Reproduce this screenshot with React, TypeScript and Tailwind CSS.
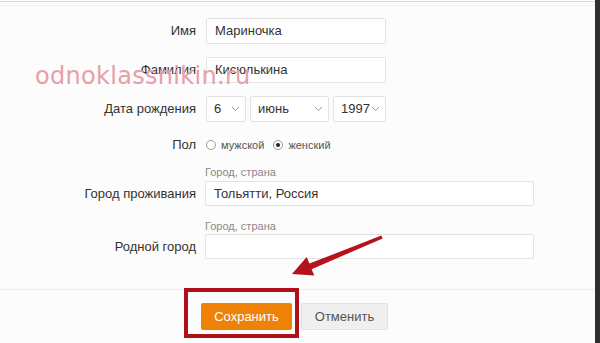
import React from "react";

const font = { fontFamily: '"Liberation Sans", Arial, sans-serif' };

function Chevron() {
  return (
    <svg width="9" height="6" viewBox="0 0 9 6" className="shrink-0">
      <path d="M1 1 L4.5 4.5 L8 1" fill="none" stroke="#9a9a9a" strokeWidth="1" />
    </svg>
  );
}

function Select({ value, w }: { value: string; w: string }) {
  return (
    <div
      className={`${w} h-[26px] bg-white border border-[#e3e3e3] rounded-[2px] flex items-center justify-between pl-[7px] pr-[5px] text-[13px] text-[#333]`}
    >
      <span>{value}</span>
      <Chevron />
    </div>
  );
}

function Label({ children }: { children: React.ReactNode }) {
  return (
    <div className="w-[196px] shrink-0 text-right text-[13px] text-[#333] pr-0">
      {children}
    </div>
  );
}

export default function App() {
  return (
    <div className="relative w-[600px] h-[343px] flex bg-[#2f2f2f] overflow-hidden" style={font}>
      <div className="w-[595px] h-full bg-[#fcfcfc] flex flex-col">
        <div className="h-px mt-px bg-[#dcdcdc]" />
        <div className="h-px mt-[3px] bg-[#f1f1f1]" />

        {/* Имя */}
        <div className="flex items-center gap-[10px] mt-[12px]">
          <Label>Имя</Label>
          <div className="w-[180px] h-[26px] bg-white border border-[#e3e3e3] rounded-[2px] flex items-center pl-[8px] text-[13px] text-[#333]">
            Мариночка
          </div>
        </div>

        {/* Фамилия */}
        <div className="flex items-center gap-[10px] mt-[13px]">
          <Label>Фамилия</Label>
          <div className="w-[180px] h-[26px] bg-white border border-[#e3e3e3] rounded-[2px] flex items-center pl-[8px] text-[13px] text-[#333]">
            Кисюлькина
          </div>
        </div>

        {/* Дата рождения */}
        <div className="flex items-center gap-[10px] mt-[13px]">
          <Label>Дата рождения</Label>
          <div className="flex items-center gap-[4px]">
            <Select value="6" w="w-[40px]" />
            <Select value="июнь" w="w-[79px]" />
            <Select value="1997" w="w-[53px]" />
          </div>
        </div>

        {/* Пол */}
        <div className="flex items-center gap-[10px] mt-[15px] h-[16px]">
          <Label>Пол</Label>
          <div className="flex items-center text-[11px] text-[#555]">
            <span className="w-[10px] h-[10px] rounded-full border border-[#9a9a9a] bg-white" />
            <span className="ml-[5px]">мужской</span>
            <span className="ml-[9px] w-[10px] h-[10px] rounded-full border border-[#9a9a9a] bg-white flex items-center justify-center">
              <span className="w-[4px] h-[4px] rounded-full bg-[#222]" />
            </span>
            <span className="ml-[5px]">женский</span>
          </div>
        </div>

        {/* Город проживания */}
        <div className="flex items-end gap-[9px] mt-[13px]">
          <div className="w-[196px] h-[25px] shrink-0 flex items-center justify-end text-[13px] text-[#333]">
            Город проживания
          </div>
          <div className="flex flex-col">
            <div className="h-[12px] leading-[12px] text-[11px] text-[#888]">Город, страна</div>
            <div className="mt-[3px] w-[329px] h-[25px] bg-white border border-[#e3e3e3] rounded-[2px] flex items-center pl-[8px] text-[13px] text-[#333]">
              Тольятти, Россия
            </div>
          </div>
        </div>

        {/* Родной город */}
        <div className="flex items-end gap-[9px] mt-[14px]">
          <div className="w-[196px] h-[25px] shrink-0 flex items-center justify-end text-[13px] text-[#333]">
            Родной город
          </div>
          <div className="flex flex-col">
            <div className="h-[12px] leading-[12px] text-[11px] text-[#888]">Город, страна</div>
            <div className="mt-[2px] w-[329px] h-[25px] bg-white border border-[#e3e3e3] rounded-[2px]" />
          </div>
        </div>

        <div className="h-px mt-[30px] bg-[#ebebeb]" />

        {/* Buttons */}
        <div className="flex items-center mt-[13px] ml-[201px] gap-[9px]">
          <div className="w-[91px] h-[27px] bg-[#ee8208] rounded-[2px] flex items-center justify-center text-[13px] text-white">
            Сохранить
          </div>
          <div className="w-[87px] h-[27px] bg-[#efefef] border border-[#e2e2e2] rounded-[2px] flex items-center justify-center text-[13px] text-[#555]">
            Отменить
          </div>
        </div>
      </div>

      {/* watermark */}
      <div
        className="absolute left-[35px] top-[61px] text-[24px] leading-[30px] text-[#e6a0a7] pointer-events-none tracking-[0.3px]"
        style={{ fontFamily: '"DejaVu Sans", Verdana, sans-serif' }}
      >
        odnoklassnikin.ru
      </div>

      {/* red highlight box */}
      <div className="absolute left-[184px] top-[288px] w-[115px] h-[50px] border-[4px] border-[#b0101a] pointer-events-none" />

      {/* arrow */}
      <svg className="absolute left-0 top-0 pointer-events-none" width="600" height="343" viewBox="0 0 600 343">
        <polygon
          points="382.6,238.4 311.6,269.2 314.3,275.6 292,274 306.7,257.1 309.4,263.6 381.4,235.6"
          fill="#b5121b"
        />
      </svg>
    </div>
  );
}
